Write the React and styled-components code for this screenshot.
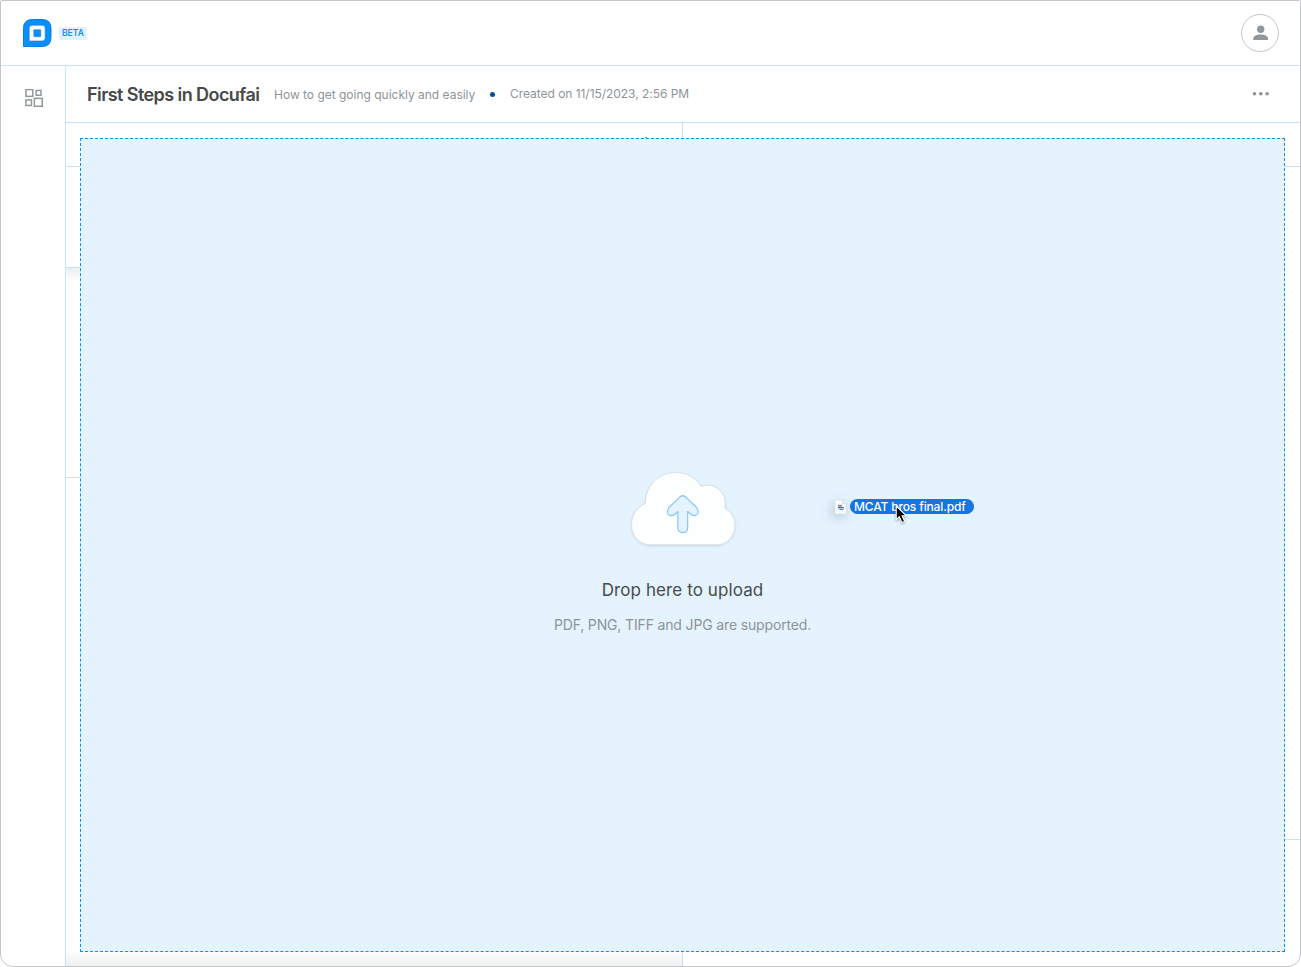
import React from "react";
import styled, { createGlobalStyle } from "styled-components";

function App() {
  return (
    <>
      <GlobalStyle />
      <Window>
        <TopBar>
          <Brand>
            <LogoIcon />
            <BetaTag>BETA</BetaTag>
          </Brand>
          <Avatar>
            <UserIcon />
          </Avatar>
        </TopBar>
        <Body>
          <Sidebar>
            <DashboardIcon />
          </Sidebar>
          <Content>
            <DocHeader>
              <Title>First Steps in Docufai</Title>
              <Subtitle>How to get going quickly and easily</Subtitle>
              <Dot />
              <Created>Created on 11/15/2023, 2:56 PM</Created>
              <MoreIcon />
            </DocHeader>
            <Workspace>
              <LeftPanel>
                <Section $height={44} />
                <Section $height={101} />
                <Section $height={210} $grey $shaded />
                <Fade />
              </LeftPanel>
              <RightPanel>
                <Section $height={44} />
                <Section $height={673} />
              </RightPanel>
              <DropZone>
                <CloudIcon />
                <DropTitle>Drop here to upload</DropTitle>
                <DropHint>PDF, PNG, TIFF and JPG are supported.</DropHint>
              </DropZone>
              <HiddenMark />
              <DraggedFile>
                <FileIcon />
                <FileName>MCAT bros final.pdf</FileName>
                <Cursor />
              </DraggedFile>
            </Workspace>
          </Content>
        </Body>
      </Window>
    </>
  );
}

export default App;

function LogoIcon() {
  return (
    <svg width="29" height="28" viewBox="0 0 29 28">
      <path
        d="M.5 27.500V9.500Q.5.5 9.500.5H19Q28 .5 28 9.500V18.500Q28 27.500 19 27.500Z"
        fill="#0a8fff"
        stroke="#087bdd"
      />
      <path
        d="M6.200 22V9Q6.200 6.200 9 6.200H19.200Q22.200 6.200 22.200 9V19Q22.200 22 19.200 22Z"
        fill="#fff"
        stroke="#087bdd"
        strokeWidth=".6"
      />
      <rect x="10.800" y="10.700" width="7" height="7" rx=".6" fill="#0a8fff" stroke="#087bdd" strokeWidth=".5" />
    </svg>
  );
}

function UserIcon() {
  return (
    <svg width="16" height="16" viewBox="0 0 16 16" fill="#8f979c">
      <circle cx="8.700" cy="4.300" r="3.700" />
      <path d="M1.300 15v-1.200C1.300 11 5.100 9.600 8.700 9.600s7.300 1.400 7.300 4.200V15z" />
    </svg>
  );
}

function DashboardIcon() {
  return (
    <svg width="18" height="18" viewBox="0 0 18 18" fill="none" stroke="#92989b" strokeWidth="1.500">
      <rect x=".95" y=".55" width="6.800" height="6.800" />
      <rect x="11.200" y="1.450" width="4.800" height="4.800" />
      <rect x=".95" y="10.950" width="5.500" height="5.500" />
      <rect x="9.350" y="9.350" width="7.900" height="7.900" />
    </svg>
  );
}

function MoreIcon() {
  return (
    <MoreSvg width="18" height="4" viewBox="0 0 18 4" fill="#8c9398">
      <circle cx="2.500" cy="1.800" r="1.800" />
      <circle cx="8.800" cy="1.800" r="1.800" />
      <circle cx="15.100" cy="1.800" r="1.800" />
    </MoreSvg>
  );
}

function CloudIcon() {
  return (
    <CloudSvg width="108" height="80" viewBox="0 0 108 80">
      <path
        d="M14.300 34.500C14.300 17 27.500 3.500 44.500 3.500C56 3.500 65 9 70 17.300C81 13.300 94.200 21 94.200 34C94.200 36 94 37.500 93.800 39.200C100 42.500 104 49 104 56.500C104 67.500 95.500 76 85 76H20.500C9 76 .5 67.500.5 56C.5 46 6 38.500 14.300 34.500Z"
        fill="#fdfefe"
        stroke="#d3dbe1"
        strokeWidth=".8"
      />
      <path d="M15 75.500H90" stroke="#e3e6e8" />
      <path
        d="M47.300 29.700Q51.800 23.600 56.300 29.700L65.600 38.500Q69.400 44.500 64.500 46.400Q61.500 47.500 56.700 42.500V59Q56.700 63.500 51.800 63.500Q46.900 63.500 46.900 59V42.500Q42 47.500 39.100 46.400Q34.200 44.500 38 38.500Z"
        fill="#e5f3ff"
        stroke="#7cc3fa"
        strokeWidth="1.100"
        strokeLinejoin="round"
      />
    </CloudSvg>
  );
}

function FileIcon() {
  return (
    <FileSvg width="13" height="16" viewBox="0 0 13 16">
      <path d="M1 1H8.500L12.500 4.500V15H1Z" fill="#f8fafc" stroke="#d9dfe5" strokeWidth=".7" />
      <path d="M8.500 1V4.500H12.500" fill="#e5e9ed" stroke="#d3d9df" strokeWidth=".6" />
      <rect x="4" y="5.800" width="4" height="2" fill="#87909b" />
      <path d="M4 8.700H10" stroke="#3476c8" strokeWidth="1.300" />
      <path d="M5.500 10.500H9.500" stroke="#77818c" />
    </FileSvg>
  );
}

function Cursor() {
  return (
    <CursorSvg width="14" height="20" viewBox="0 0 14 20">
      <path
        d="M1.200 1V14.700L4.400 11.700L6.900 17.600L9.600 16.400L7.100 10.700H11.200Z"
        fill="#000"
        stroke="#fff"
        strokeWidth="1.100"
        strokeLinejoin="round"
      />
    </CursorSvg>
  );
}

const GlobalStyle = createGlobalStyle`
  * {
    box-sizing: border-box;
  }
  body {
    margin: 0;
    background: #fff;
    font-family: Inter, "Liberation Sans", sans-serif;
  }
  svg {
    display: block;
    flex: none;
  }
`;

const Window = styled.div`
  display: flex;
  flex-direction: column;
  width: 1301px;
  height: 967px;
  overflow: hidden;
  background: #fff;
  border: 1px solid #c4c6c9;
  border-radius: 2px 2px 13px 13px;
`;
const TopBar = styled.header`
  display: flex;
  flex: none;
  align-items: center;
  justify-content: space-between;
  height: 65px;
  padding: 0 21px 0 22px;
  border-bottom: 1px solid #cae3f7;
`;
const Brand = styled.div`
  display: flex;
  align-items: center;
  gap: 7px;
`;
const BetaTag = styled.span`
  width: 28px;
  height: 13px;
  border-radius: 1px;
  background: #e1f1fe;
  color: #168ff0;
  font-size: 8.500px;
  font-weight: 600;
  line-height: 13px;
  letter-spacing: 0.1px;
  text-align: center;
`;
const Avatar = styled.div`
  display: flex;
  align-items: center;
  justify-content: center;
  width: 38px;
  height: 38px;
  border: 1px solid #c5c7c9;
  border-radius: 50%;
`;
const Body = styled.div`
  display: flex;
  flex: 1;
  min-height: 0;
`;
const Sidebar = styled.nav`
  flex: none;
  width: 65px;
  padding: 23px 0 0 24px;
  border-right: 1px solid #cae3f7;
`;
const Content = styled.main`
  display: flex;
  flex-direction: column;
  flex: 1;
`;
const DocHeader = styled.div`
  display: flex;
  flex: none;
  align-items: center;
  height: 57px;
  padding: 0 30px 0 21px;
  border-bottom: 1px solid #bfe2fb;
  white-space: nowrap;
`;
const Title = styled.h1`
  width: 187px;
  margin: 0;
  color: #45494c;
  font-size: 18px;
  font-weight: 600;
  letter-spacing: -0.570px;
`;
const Subtitle = styled.span`
  width: 216px;
  padding-top: 1px;
  color: #8d9499;
  font-size: 12px;
  letter-spacing: -0.010px;
`;
const Dot = styled.span`
  width: 5px;
  height: 5px;
  margin-right: 15px;
  border-radius: 50%;
  background: #00539a;
`;
const Created = styled.span`
  padding-bottom: 1px;
  color: #8d9499;
  font-size: 12px;
  letter-spacing: -0.040px;
`;
const MoreSvg = styled.svg`
  margin-left: auto;
`;
const Workspace = styled.div`
  position: relative;
  display: flex;
  flex: 1;
`;
const LeftPanel = styled.div`
  display: flex;
  flex-direction: column;
  width: 617px;
  border-right: 1px solid #bfe2fb;
`;
const RightPanel = styled.div`
  flex: 1;
`;
const Section = styled.div`
  height: ${(props) => props.$height}px;
  border-bottom: 1px solid ${(props) => (props.$grey ? "#d9dbdd" : "#c5e2f8")};
  background: ${(props) =>
    props.$shaded ? "linear-gradient(#efefef, #fff 14px)" : "none"};
`;
const Fade = styled.div`
  height: 15px;
  margin-top: auto;
  background: linear-gradient(#fff, #eeefef);
`;
const DropZone = styled.section`
  position: absolute;
  inset: 15px 15px 14px 14px;
  display: flex;
  flex-direction: column;
  align-items: center;
  padding-top: 330px;
  border: 1px dashed #0a91f5;
  background: #e5f3ff;
`;
const CloudSvg = styled.svg`
  margin-left: 5px;
  filter: drop-shadow(0 1px 1px rgba(90, 130, 160, 0.18));
`;
const DropTitle = styled.h2`
  margin: 29px 0 0;
  color: #454b50;
  font-size: 17px;
  font-weight: 400;
  line-height: 24px;
  letter-spacing: 0.1px;
`;
const DropHint = styled.p`
  margin: 13px 0 0;
  color: #8d9499;
  font-size: 14px;
  line-height: 20px;
  letter-spacing: -0.150px;
`;
// tip of an icon that peeks out above the drop zone
const HiddenMark = styled.span`
  position: absolute;
  top: 14px;
  left: 579px;
  width: 2px;
  height: 1px;
  background: #8b9aa6;
`;
const DraggedFile = styled.div`
  position: absolute;
  top: 376px;
  left: 768px;
  display: flex;
  align-items: flex-start;
`;
const FileSvg = styled.svg`
  margin-right: 3px;
  filter: drop-shadow(-2px 3px 6px rgba(70, 90, 110, 0.3));
`;
const FileName = styled.span`
  width: 124px;
  height: 15px;
  padding-left: 4px;
  border-radius: 8px;
  background: #1474e8;
  color: #fff;
  font-size: 12px;
  font-weight: 500;
  line-height: 15px;
  letter-spacing: -0.150px;
  white-space: nowrap;
`;
const CursorSvg = styled.svg`
  position: absolute;
  top: 6px;
  left: 61px;
  filter: drop-shadow(0 1px 1px rgba(0, 0, 0, 0.35));
`;
